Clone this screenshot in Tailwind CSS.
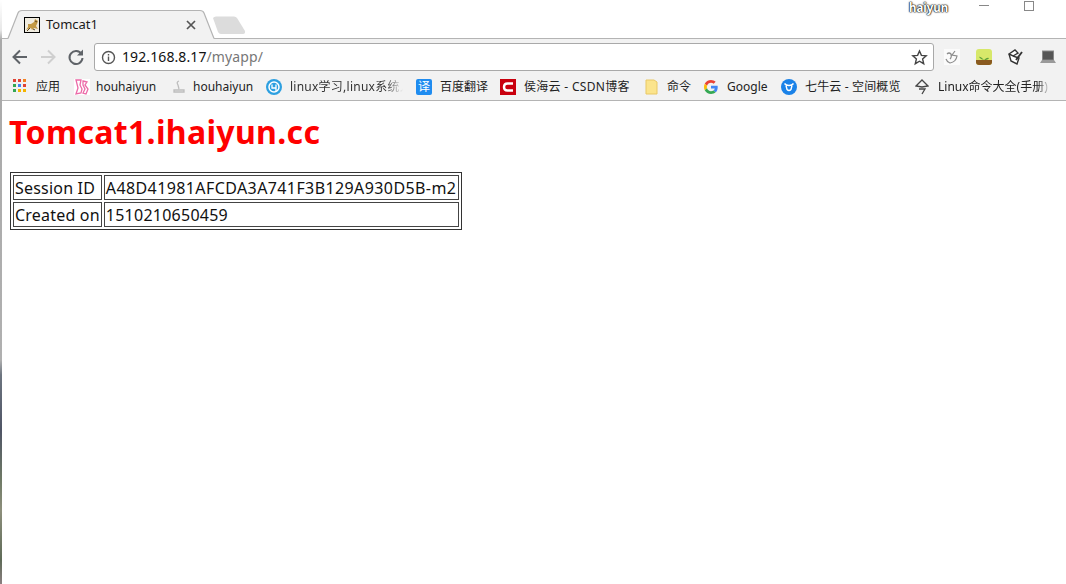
<!DOCTYPE html>
<html lang="zh">
<head>
<meta charset="UTF-8">
<title>Tomcat1</title>
<script src="https://cdn.jsdelivr.net/npm/@tailwindcss/browser@4"></script>
</head>
<body class="relative bg-white h-[584px] w-[1066px] overflow-hidden font-['Noto_Sans','Noto_Sans_CJK_SC',sans-serif] pl-[2px]">
  <!-- desktop showing behind the window edge -->
  <div class="absolute left-0 top-0 z-40 w-[2px] h-full bg-[linear-gradient(to_bottom,#ffffff_0,#e8e8e8_30px,#a9a9a9_40px,#b0b0b0_360px,#6d7580_375px,#4f5566_430px,#6f7a66_480px,#8d8f7c_510px,#5f6b58_560px,#8a7f80_584px)]"></div>
  <!-- title bar + tabs -->
  <div class="relative h-[38px] bg-white">
    <svg class="absolute z-20 left-[3px] top-[9px]" width="245" height="31" viewBox="0 0 245 31">
      <path d="M3 31 L3 29.5 L13 4 Q14 1.5 17 1.5 L195 1.5 Q198 1.5 199 4 L209 29.5 L209 31 Z" fill="#f2f2f2"/>
      <path d="M3 29.5 L13 4 Q14 1.5 17 1.5 L195 1.5 Q198 1.5 199 4 L209 29.5" fill="none" stroke="#b4b4b4" stroke-width="1.200"/>
      <path d="M208 9 Q209 7.5 211 7.5 L229 7.5 Q231 7.5 232 9 L240 22 Q240.500 25 238 25 L216 25 Q214 25 213 23 Z" fill="#dcdcdc"/>
    </svg>
    <div class="absolute z-30 left-[22px] top-[17px] w-[16px] h-[16px] border border-black bg-[#f0ece0] flex items-center justify-center">
      <svg width="14" height="14" viewBox="0 0 14 14"><path d="M1 12 L3 9 L3 6 L6 6 L9 4 L10 1 L13 3 L12 6 L11 8 L13 11 L9 10 L7 12 L6 10 L3 11 Z" fill="#c49a45"/><path d="M2 13 L5 10 M8 11 L10 12 M10 3 L12 4" stroke="#5a4320" stroke-width="1"/></svg>
    </div>
    <span class="absolute z-30 left-[44px] top-[14px] text-[13px] leading-[20px] text-[#1a1a1a]">Tomcat1</span>
    <svg class="absolute z-30 left-[184px] top-[20px]" width="10" height="10" viewBox="0 0 10 10"><path d="M1 1 L9 9 M9 1 L1 9" stroke="#555" stroke-width="1.700"/></svg>
    <span class="absolute left-[907px] top-0 text-[11.500px] leading-[15px] font-bold text-white [text-shadow:0_0_1px_#000,0_0_1px_#000,0_0_2px_#000]">haiyun</span>
    <div class="absolute left-[977px] top-[5px] w-[10px] h-px bg-[#888]"></div>
    <div class="absolute left-[1022px] top-px w-[10px] h-[10px] border border-[#888]"></div>
  </div>
  <!-- toolbar -->
  <div class="relative z-10 h-[33px] pt-[4px] bg-[#f2f2f2] border-t border-[#b4b4b4] flex items-center">
    <svg class="ml-[8px]" width="20" height="20" viewBox="0 0 20 20"><path d="M17 10 H4 M10 3.500 L3.500 10 L10 16.500" fill="none" stroke="#5f6368" stroke-width="2"/></svg>
    <svg class="ml-[8px]" width="20" height="20" viewBox="0 0 20 20"><path d="M3 10 H16 M10 3.500 L16.500 10 L10 16.500" fill="none" stroke="#cfcfcf" stroke-width="2"/></svg>
    <svg class="ml-[8px]" width="20" height="20" viewBox="0 0 20 20"><path d="M15.500 7 A6.500 6.500 0 1 0 16.500 11" fill="none" stroke="#5f6368" stroke-width="2"/><path d="M17 2.500 V8.500 H11 Z" fill="#5f6368"/></svg>
    <div class="ml-[8px] w-[840px] h-[28px] bg-white border border-[#a9a9a9] rounded-[3px] flex items-center shrink-0">
      <svg class="ml-[6px]" width="15" height="15" viewBox="0 0 15 15"><circle cx="7.500" cy="7.500" r="6" fill="none" stroke="#555" stroke-width="1.400"/><path d="M7.500 6.500 V11 M7.500 4 V5.400" stroke="#555" stroke-width="1.400"/></svg>
      <span class="ml-[6px] text-[14px] tracking-[0.1px] leading-[20px] text-[#111]">192.168.8.17<span class="text-[#777]">/myapp/</span></span>
      <svg class="ml-auto mr-[5px]" width="17" height="17" viewBox="0 0 17 17"><path d="M8.500 2 L10.400 6.400 L15.200 6.800 L11.600 10 L12.700 14.700 L8.500 12.200 L4.300 14.700 L5.400 10 L1.800 6.800 L6.600 6.400 Z" fill="none" stroke="#444" stroke-width="1.400"/></svg>
    </div>
    <svg class="ml-[10px]" width="16" height="16" viewBox="0 0 16 16"><rect width="16" height="16" fill="#fbfbfb"/><path d="M3 5 Q5 3 7 5 Q8 8 6 10 M11 2 L8 6 L13 7 Q12 13 6 14 Q3 13 2 10" fill="none" stroke="#8c8c8c" stroke-width="1.200"/></svg>
    <svg class="ml-[16px]" width="16" height="16" viewBox="0 0 16 16"><rect width="16" height="16" rx="3" fill="#d7e86a"/><path d="M0 11 H16 V13 Q16 16 13 16 H3 Q0 16 0 13 Z" fill="#8a5a20"/><path d="M8 11 Q4 7 3 8 Q5 11 8 11 Q11 8 13 9 Q12 11 8 11" fill="#5da03a"/></svg>
    <svg class="ml-[16px]" width="16" height="16" viewBox="0 0 16 16"><path d="M1 5 L7 1 L10 4 L5 7 Z M1 5 L3 12 L9 15 L11 9 L5 7" fill="#fff" stroke="#333" stroke-width="1.400"/><path d="M8 11 L14 3" stroke="#333" stroke-width="1.800"/></svg>
    <svg class="ml-[16px]" width="16" height="16" viewBox="0 0 16 16"><rect x="2.500" y="2" width="11" height="9" fill="#555" stroke="#888"/><path d="M2 11 H14 L16 14 H0 Z" fill="#9a9a9a"/></svg>
  </div>
  <!-- bookmarks -->
  <div class="relative z-10 h-[30px] pt-[3px] bg-[#f2f2f2] border-b border-[#b4b4b4] flex items-center text-[12px] text-[#222] whitespace-nowrap overflow-hidden">
    <div class="ml-[11px] mb-[4px] w-[13px] h-[13px] grid grid-cols-3 gap-[2px] shrink-0">
      <i class="bg-[#e04335]"></i><i class="bg-[#e04335]"></i><i class="bg-[#f4811f]"></i>
      <i class="bg-[#34a853]"></i><i class="bg-[#4285f4]"></i><i class="bg-[#e04335]"></i>
      <i class="bg-[#34a853]"></i><i class="bg-[#f4b400]"></i><i class="bg-[#f4b400]"></i>
    </div>
    <span class="ml-[10px] w-[24px]">应用</span>
    <svg class="ml-[14px]" width="16" height="16" viewBox="0 0 16 16"><rect width="16" height="16" fill="#fff"/><path d="M2 1 L7 1 L6 6 L8 10 L7 14 L2 15 L4 9 Z M9 2 L13 3 L11 6 L14 10 L12 15 L9 14 L11 10 L9 6 Z" fill="none" stroke="#ec6aa8" stroke-width="1.300"/></svg>
    <span class="ml-[6px] w-[62px]">houhaiyun</span>
    <svg class="ml-[13px]" width="16" height="16" viewBox="0 0 16 16"><path d="M8 2 Q5 3 7 6 L8 10 M3 11 H13 V13 H3 Z" fill="none" stroke="#bdbdbd" stroke-width="1.300"/></svg>
    <span class="ml-[6px] w-[61px]">houhaiyun</span>
    <svg class="ml-[12px]" width="16" height="16" viewBox="0 0 16 16"><circle cx="8" cy="8" r="8" fill="#2c9fe0"/><circle cx="8" cy="8" r="5" fill="none" stroke="#fff" stroke-width="1.500"/><path d="M6 5.500 V9 H10 M10 5.500 V12" fill="none" stroke="#fff" stroke-width="1.300"/></svg>
    <span class="ml-[8px] w-[113px] overflow-hidden tracking-[0.25px] text-[#333] [mask-image:linear-gradient(to_right,#000_95px,transparent_113px)]">linux学习,linux系统入</span>
    <div class="ml-[13px] w-[16px] h-[16px] rounded-[2px] bg-[#1f8cf0] text-white text-[12px] leading-[16px] text-center shrink-0">译</div>
    <span class="ml-[8px] w-[48px]">百度翻译</span>
    <div class="ml-[12px] w-[16px] h-[16px] bg-[#c9000e] flex items-center justify-center shrink-0">
      <svg width="12" height="12" viewBox="0 0 12 12"><path d="M11 2.500 H5.500 Q2 2.500 2 6 Q2 9.500 5.500 9.500 H11" fill="none" stroke="#fff" stroke-width="2.400"/></svg>
    </div>
    <span class="ml-[8px] w-[107px] tracking-[0.3px]">侯海云 - CSDN博客</span>
    <svg class="ml-[14px]" width="13" height="16" viewBox="0 0 13 16"><path d="M1 1 H9 L12 3 V15 H1 Z" fill="#fbe48c" stroke="#e9c864"/></svg>
    <span class="ml-[9px] w-[24px]">命令</span>
    <svg class="ml-[13px]" width="14" height="14" viewBox="0 0 48 48"><path fill="#EA4335" d="M24 9.500c3.500 0 6.700 1.300 9.100 3.500l6.800-6.800C35.800 2.400 30.300 0 24 0 14.600 0 6.500 5.400 2.600 13.200l7.900 6.200C12.400 13.700 17.700 9.500 24 9.500z"/><path fill="#4285F4" d="M47 24.500c0-1.600-.1-3.100-.4-4.500H24v9h12.900c-.6 3-2.200 5.500-4.700 7.200l7.700 6c4.500-4.200 7.100-10.300 7.100-17.700z"/><path fill="#FBBC05" d="M10.500 28.600A14.500 14.500 0 0 1 9.700 24c0-1.600.3-3.200.8-4.600l-7.900-6.200A24 24 0 0 0 0 24c0 3.900.9 7.500 2.600 10.800l7.900-6.200z"/><path fill="#34A853" d="M24 48c6.500 0 11.900-2.100 15.900-5.800l-7.700-6c-2.200 1.400-4.900 2.300-8.200 2.300-6.300 0-11.600-4.200-13.500-9.900l-7.900 6.200C6.500 42.600 14.600 48 24 48z"/></svg>
    <span class="ml-[9px] w-[42px]">Google</span>
    <svg class="ml-[12px]" width="16" height="16" viewBox="0 0 16 16"><circle cx="8" cy="8" r="8" fill="#1a82e8"/><path d="M3.500 4.500 Q5 6.500 8 6.500 Q11 6.500 12.500 4.500 M5 6.500 L6 10.500 Q8 12.500 10 10.500 L11 6.500" fill="none" stroke="#fff" stroke-width="1.400"/></svg>
    <span class="ml-[8px] w-[96px] tracking-[0.15px]">七牛云 - 空间概览</span>
    <svg class="ml-[14px]" width="14" height="16" viewBox="0 0 14 16"><path d="M7 1 L13 7 L7 8 L1 7 Z M4 10 H10 L7 15" fill="none" stroke="#444" stroke-width="1.300"/></svg>
    <span class="ml-[9px] w-[112px] overflow-hidden [mask-image:linear-gradient(to_right,#000_100px,transparent_112px)]">Linux命令大全(手册)</span>
  </div>
  <!-- page -->
  <main class="pl-[7px]">
    <h1 class="mt-[10px] mb-[19px] text-[32px] tracking-[0.33px] leading-[42px] font-bold text-[#ff0000]">Tomcat1.ihaiyun.cc</h1>
    <table class="ml-[1px] border-separate border-spacing-[2px] border border-[#333] text-[16px] leading-[22px] text-[#111]">
      <tr>
        <td class="border border-[#444] px-[1px] pt-[1px] pb-0 tracking-[0.2px]">Session ID</td>
        <td class="border border-[#444] pl-[1px] pr-[2px] pt-[1px] pb-0 tracking-[0.4px]">A48D41981AFCDA3A741F3B129A930D5B-m2</td>
      </tr>
      <tr>
        <td class="border border-[#444] px-[1px] pt-[1px] pb-0 tracking-[0.2px]">Created on</td>
        <td class="border border-[#444] pl-[1px] pr-[2px] pt-[1px] pb-0 tracking-[0.25px]">1510210650459</td>
      </tr>
    </table>
  </main>
</body>
</html>
